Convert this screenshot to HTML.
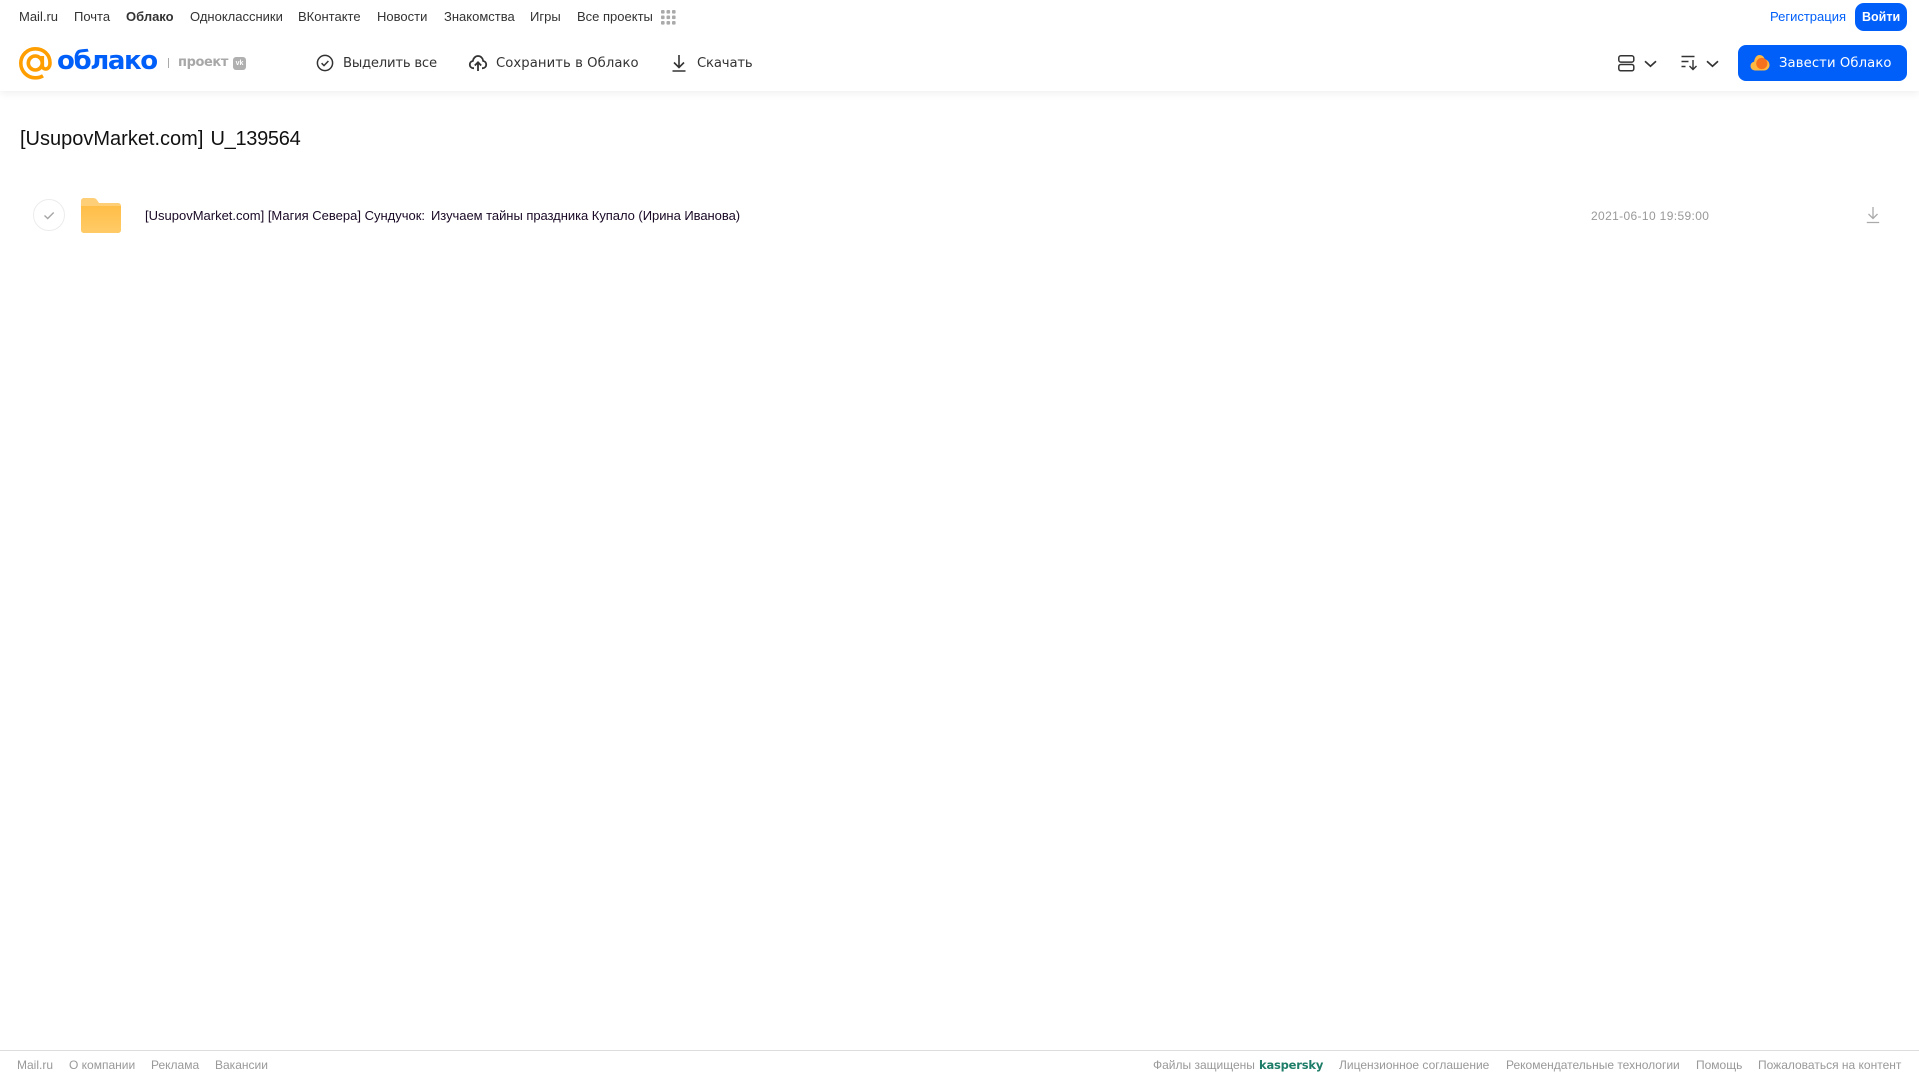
<!DOCTYPE html>
<html lang="ru"><head><meta charset="utf-8"><title>Облако</title>
<style>
html,body{margin:0;padding:0;background:#fff;width:1919px;height:1079px;overflow:hidden}
body{position:relative;font-family:"Liberation Sans",Arial,sans-serif}
.t{position:absolute;white-space:nowrap;line-height:18px}
.n{top:8px;font-size:13px;color:#333}
.b{top:54px;font-family:"DejaVu Sans",sans-serif;font-size:13.2px;color:#333;line-height:20px}
.f{top:1056px;font-size:12px;color:#999}
svg{position:absolute;overflow:visible}
#hdr{position:absolute;left:0;top:0;width:1919px;height:91px;background:#fff;box-shadow:0 2px 8px rgba(0,0,0,.07)}
</style></head><body>
<div id="hdr"></div>
<span class="t n" style="left:19px">Mail.ru</span>
<span class="t n" style="left:74px">Почта</span>
<span class="t n" style="left:126px;font-weight:bold">Облако</span>
<span class="t n" style="left:190px">Одноклассники</span>
<span class="t n" style="left:298px">ВКонтакте</span>
<span class="t n" style="left:377px">Новости</span>
<span class="t n" style="left:444px">Знакомства</span>
<span class="t n" style="left:530px">Игры</span>
<span class="t n" style="left:577px">Все проекты</span>
<svg style="left:661px;top:10px" width="15" height="15" fill="#aaa"><rect x="0" y="0" width="3.6" height="3.6" rx="1"/><rect x="5.5" y="0" width="3.6" height="3.6" rx="1"/><rect x="11" y="0" width="3.6" height="3.6" rx="1"/><rect x="0" y="5.5" width="3.6" height="3.6" rx="1"/><rect x="5.5" y="5.5" width="3.6" height="3.6" rx="1"/><rect x="11" y="5.5" width="3.6" height="3.6" rx="1"/><rect x="0" y="11" width="3.6" height="3.6" rx="1"/><rect x="5.5" y="11" width="3.6" height="3.6" rx="1"/><rect x="11" y="11" width="3.6" height="3.6" rx="1"/></svg>
<span class="t n" style="left:1770px;color:#005ff9">Регистрация</span>
<div style="position:absolute;left:1855px;top:3px;width:52px;height:28px;border-radius:9px;background:#005ff9"></div>
<span class="t n" style="left:1862px;color:#fff;font-weight:bold;font-size:12.5px">Войти</span>

<svg style="left:19px;top:47px" width="33" height="33" viewBox="0 0 33 33" fill="none" stroke="#ff9e00" stroke-width="3.6"><circle cx="16.3" cy="16" r="7"/><path d="M23.3 9v9.500c0 5 7.700 5 7.700-2.500C31 7.500 24.500 1.800 16.300 1.800 8 1.800 1.800 8.300 1.800 16.300S8.300 30.800 16.300 30.800c3 0 5.500-.7 7.700-2"/></svg>
<span class="t" style="left:57px;top:43px;font-family:'DejaVu Sans',sans-serif;font-size:26px;font-weight:bold;color:#005ff9;line-height:36px;letter-spacing:-1.4px">облако</span>
<div style="position:absolute;left:168px;top:58px;width:1px;height:10px;background:#aaa"></div>
<span class="t" style="left:178px;top:53px;font-family:'DejaVu Sans',sans-serif;font-size:13px;font-weight:bold;color:#a8a8a8;line-height:20px;letter-spacing:-.4px">проект</span>
<div style="position:absolute;left:233px;top:57px;width:13px;height:13px;border-radius:3px;background:#b0b0b0;color:#fff;font-size:7px;font-weight:bold;text-align:center;line-height:13px">vk</div>

<svg style="left:316px;top:54px" width="18" height="18" viewBox="0 0 18 18" fill="none" stroke="#333" stroke-width="1.500"><circle cx="9" cy="9" r="7.600"/><path d="M5.600 9.200l2.400 2.400 4.400-4.600"/></svg>
<span class="t b" style="left:343px;letter-spacing:-.22px">Выделить все</span>
<svg style="left:469px;top:54px" width="18" height="18" viewBox="0 0 18 18" fill="none" stroke="#333" stroke-width="1.800"><path d="M5 14.200H4.200C2.200 14 .8 12.500.8 10.600c0-1.800 1.300-3.300 3-3.600C4.300 4.200 6.400 2 9 2c2.700 0 4.800 2.100 5.200 5 1.800.3 3 1.800 3 3.600 0 1.900-1.400 3.400-3.400 3.600H13"/><path d="M9 17V8.500M5.800 11.500L9 8.300l3.200 3.200"/></svg>
<span class="t b" style="left:496px;letter-spacing:.07px">Сохранить в Облако</span>
<svg style="left:671px;top:54px" width="16" height="18" viewBox="0 0 16 18" fill="none" stroke="#333" stroke-width="1.600"><path d="M8 1v12M3 8.500L8 13.500l5-5M1.500 17h13"/></svg>
<span class="t b" style="left:697px;letter-spacing:-.15px">Скачать</span>

<svg style="left:1618px;top:55px" width="17" height="17" viewBox="0 0 17 17" fill="none" stroke="#333" stroke-width="1.500"><rect x=".8" y=".8" width="15" height="6.300" rx="2"/><rect x=".8" y="9.500" width="15" height="6.300" rx="2"/></svg>
<svg style="left:1644px;top:60px" width="13" height="8" viewBox="0 0 13 8" fill="none" stroke="#333" stroke-width="1.700"><path d="M1 1.200l5.500 5 5.500-5"/></svg>
<svg style="left:1681px;top:55px" width="17" height="16" viewBox="0 0 17 16" fill="none" stroke="#333" stroke-width="1.400"><path d="M.5 1.500h13M.5 6.500h7M.5 11.500h4"/><path d="M12 5v9.500M8.500 11l3.500 3.500L15.500 11"/></svg>
<svg style="left:1706px;top:60px" width="13" height="8" viewBox="0 0 13 8" fill="none" stroke="#333" stroke-width="1.700"><path d="M1 1.200l5.500 5 5.500-5"/></svg>

<div style="position:absolute;left:1738px;top:45px;width:169px;height:36px;border-radius:8px;background:#005ff9"></div>
<svg style="left:1750px;top:54px" width="20" height="17" viewBox="0 0 20 17"><path d="M5.500 16.500C2.500 16.500.5 14.500.5 12c0-2.300 1.600-4 3.600-4.300C4.600 4 6.500 1 9.500 1c2.800 0 4.600 2 5.200 4.200 2.600.4 4.800 2.800 4.800 5.800 0 3-2.400 5.500-5.500 5.500z" fill="#ffb840"/><circle cx="11.800" cy="9.500" r="5.600" fill="#f6711e"/></svg>
<span class="t b" style="left:1779px;color:#fff;letter-spacing:.1px">Завести Облако</span>

<span class="t" style="left:20px;top:127px;font-size:20px;color:#111;line-height:24px">[UsupovMarket.com]</span>
<span class="t" style="left:210.500px;top:127px;font-size:20px;color:#111;line-height:24px;letter-spacing:-.3px">U_139564</span>

<svg style="left:33px;top:199px" width="33" height="33" viewBox="0 0 33 33" fill="none"><circle cx="16" cy="16" r="15.500" stroke="#ececec" stroke-width="1"/><path d="M11.500 16.500l3.200 3 6-6" stroke="#a5a5a5" stroke-width="1.400"/></svg>
<svg style="left:81px;top:198px" width="40" height="35" viewBox="0 0 40 35"><defs><linearGradient id="g" x1="0" y1="0" x2="0" y2="1"><stop offset="0" stop-color="#ffbe47"/><stop offset="1" stop-color="#ffcb68"/></linearGradient></defs><path d="M3 0h9c2 0 3 .8 4 2l2 3h19c1.800 0 3 1.200 3 3v4H0V3C0 1.200 1.200 0 3 0z" fill="#ffcf78"/><path d="M0 8h40v24c0 1.800-1.200 3-3 3H3c-1.800 0-3-1.200-3-3z" fill="url(#g)"/></svg>
<span class="t" style="left:145px;top:207px;font-size:13px;color:#1a0a26">[UsupovMarket.com] [Магия Севера] Сундучок:</span>
<span class="t" style="left:431px;top:207px;font-size:13px;color:#1a0a26;letter-spacing:-.04px">Изучаем тайны праздника Купало (Ирина Иванова)</span>
<span class="t" style="left:1591px;top:207px;font-size:12px;color:#999;letter-spacing:.36px">2021-06-10 19:59:00</span>
<svg style="left:1866px;top:206px" width="14" height="18" viewBox="0 0 14 18" fill="none" stroke="#aaa" stroke-width="1.300"><path d="M7 1v11.500M2.500 8L7 12.500 11.500 8M.8 16.500h12.400"/></svg>

<div style="position:absolute;left:0;top:1050px;width:1919px;height:1px;background:#ddd"></div>
<span class="t f" style="left:17px">Mail.ru</span>
<span class="t f" style="left:69px">О компании</span>
<span class="t f" style="left:151px">Реклама</span>
<span class="t f" style="left:215px">Вакансии</span>
<span class="t f" style="left:1153px">Файлы защищены</span>
<span class="t f" style="left:1259px;color:#1d7d68;font-family:'DejaVu Sans',sans-serif;font-weight:bold;font-size:11.500px;letter-spacing:-.2px">kaspersky</span>
<span class="t f" style="left:1339px">Лицензионное соглашение</span>
<span class="t f" style="left:1506px">Рекомендательные технологии</span>
<span class="t f" style="left:1696px">Помощь</span>
<span class="t f" style="left:1758px">Пожаловаться на контент</span>
</body></html>
